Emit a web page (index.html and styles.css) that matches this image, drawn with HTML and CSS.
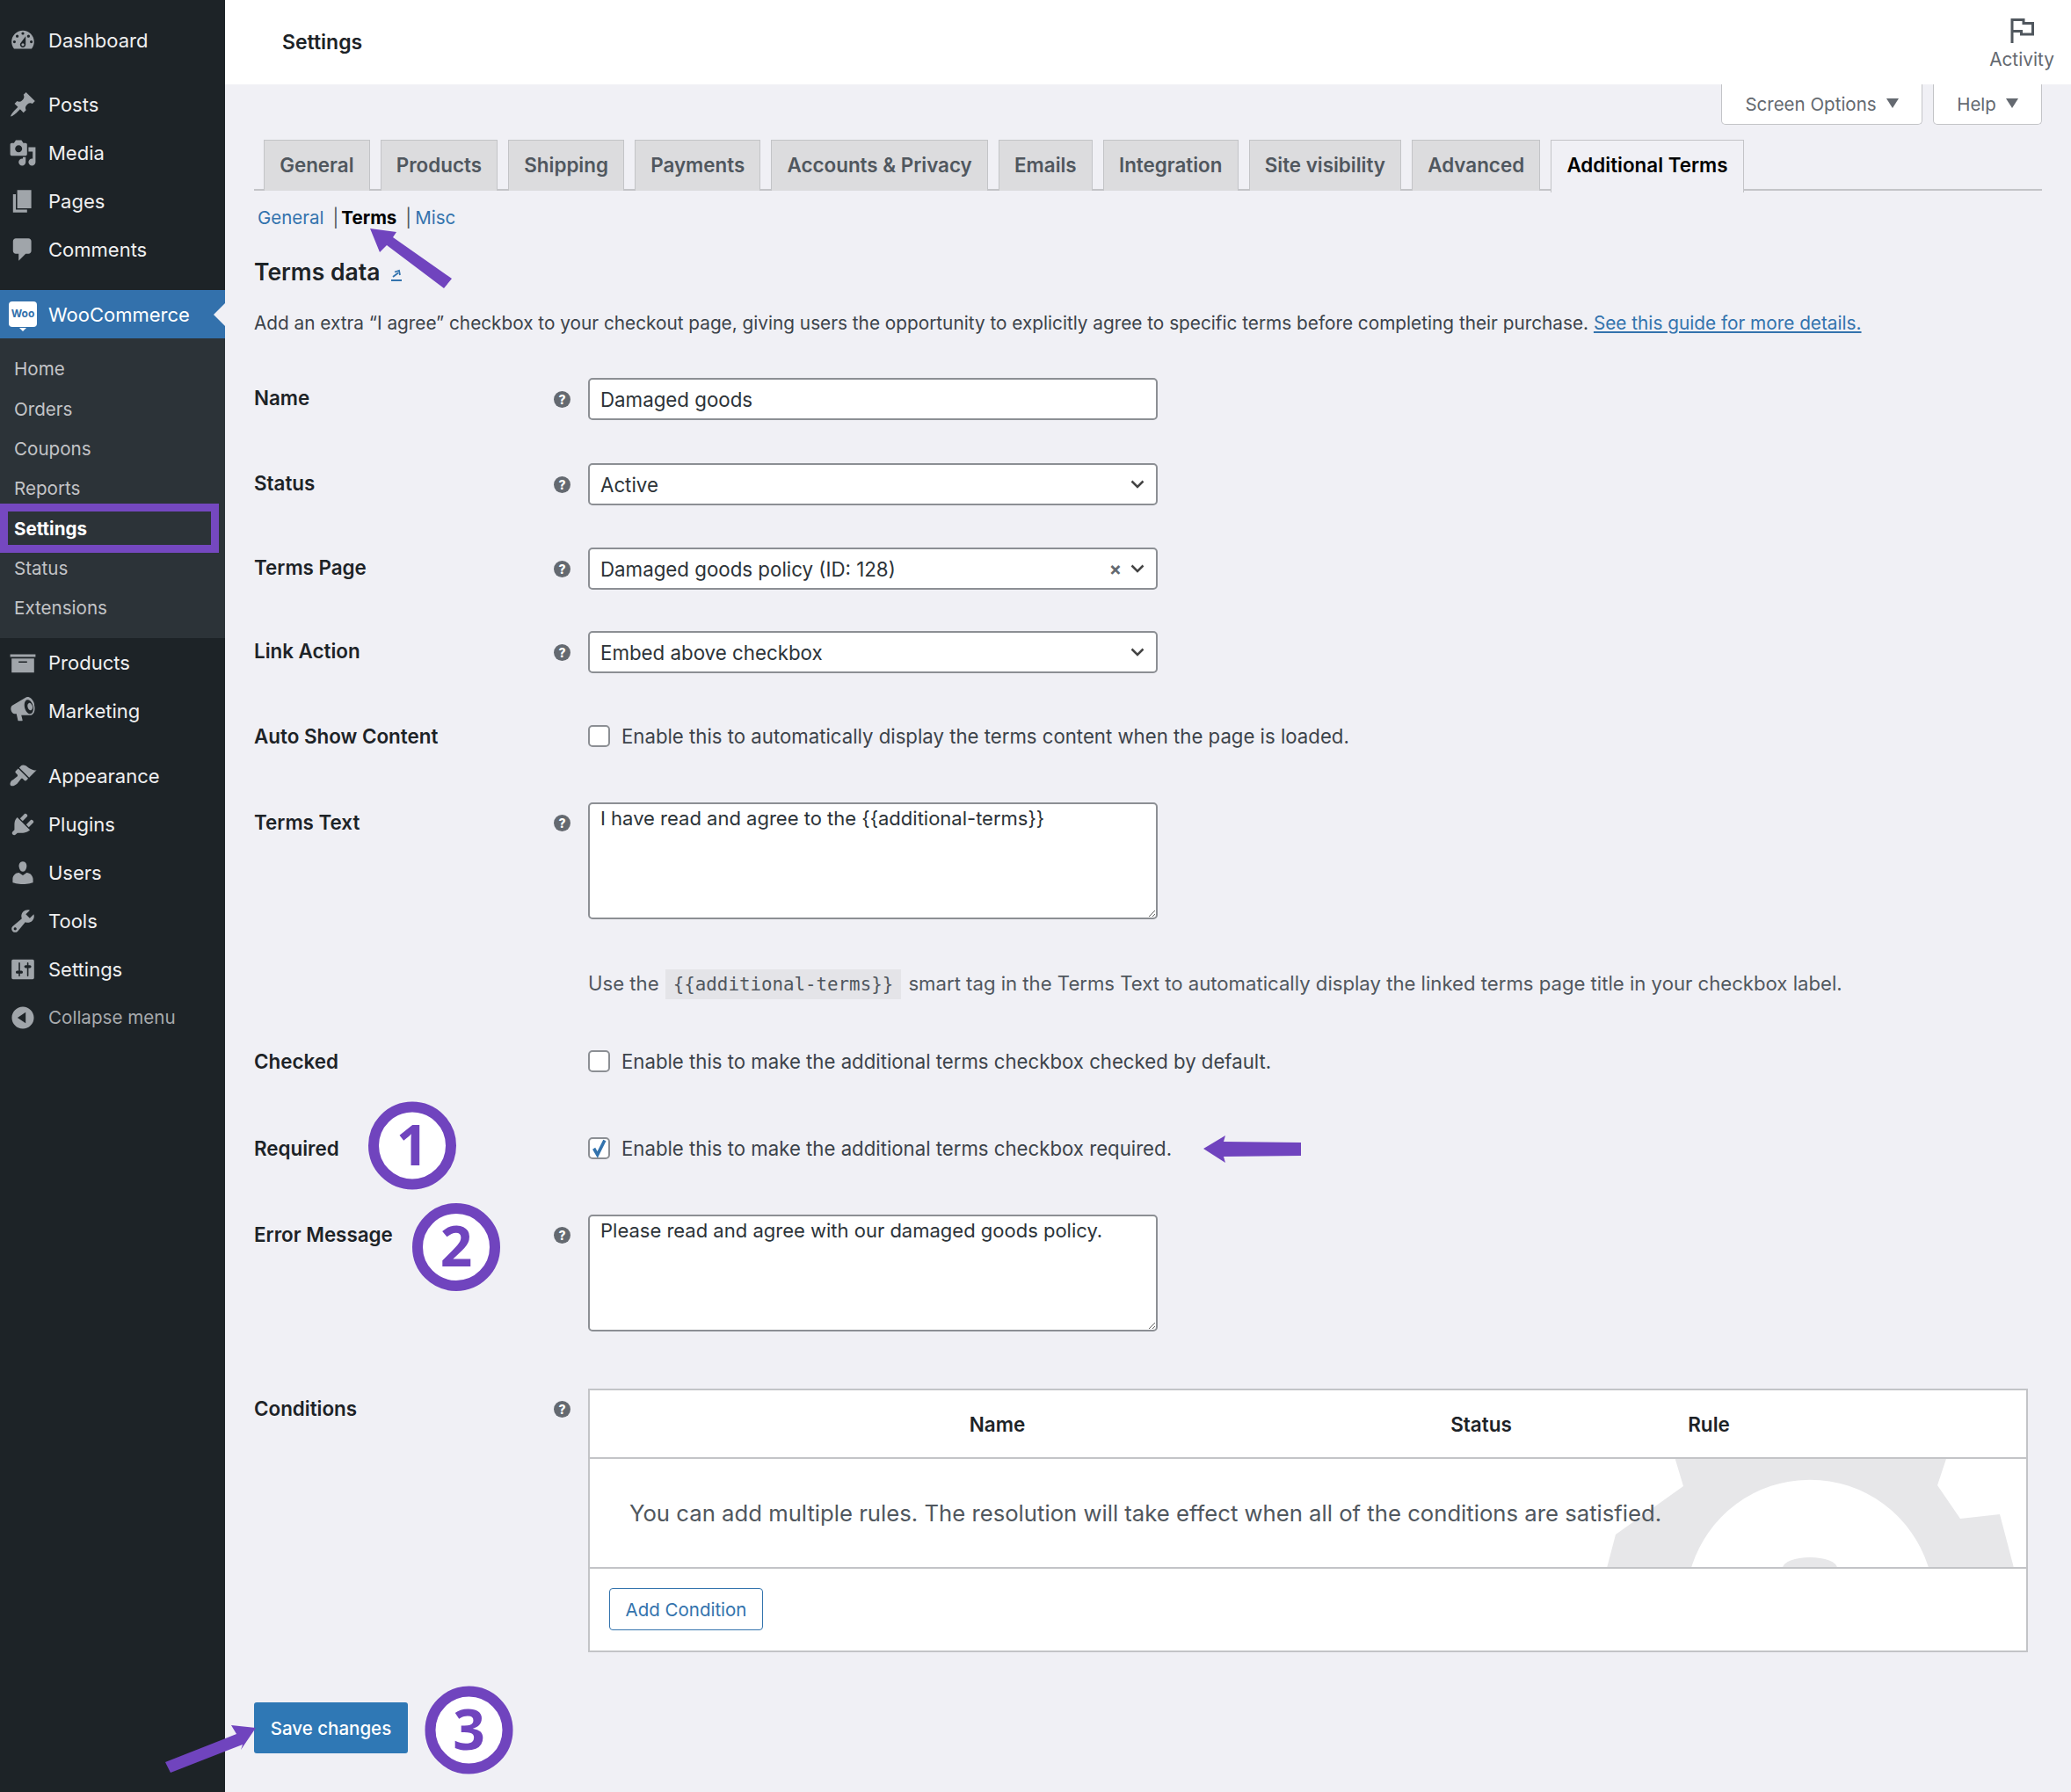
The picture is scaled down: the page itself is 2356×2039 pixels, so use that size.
FILE: index.html
```html
<!DOCTYPE html>
<html lang="en">
<head>
<meta charset="utf-8">
<title>Settings</title>
<link rel="stylesheet" href="styles.css">
</head>
<body>
<div class="page">
<aside class="sidebar">
  <ul class="menu first">
    <li class="item"><svg class="ico" viewBox="0 0 20 20"><path fill-rule="evenodd" d="M3.76 16h12.48c1.1-1.37 1.76-3.11 1.76-5 0-4.42-3.58-8-8-8s-8 3.58-8 8c0 1.89.66 3.63 1.76 5zM10 4c.55 0 1 .45 1 1s-.45 1-1 1-1-.45-1-1 .45-1 1-1zM6 6c.55 0 1 .45 1 1s-.45 1-1 1-1-.45-1-1 .45-1 1-1zm8 0c.55 0 1 .45 1 1s-.45 1-1 1-1-.45-1-1 .45-1 1-1zm-5.37 5.55L12 7v6c0 1.1-.9 2-2 2s-2-.9-2-2c0-.57.24-1.08.63-1.45zM4 10c.55 0 1 .45 1 1s-.45 1-1 1-1-.45-1-1 .45-1 1-1zm12 0c.55 0 1 .45 1 1s-.45 1-1 1-1-.45-1-1 .45-1 1-1zm-5 3c0-.55-.45-1-1-1s-1 .45-1 1 .45 1 1 1 1-.45 1-1z"/></svg>Dashboard</li>
  </ul>
  <ul class="menu">
    <li class="item"><svg class="ico" viewBox="0 0 20 20"><path d="M10.44 3.02l1.82-1.82 6.36 6.35-1.83 1.82c-1.05-.68-2.48-.57-3.41.36l-.75.75c-.92.93-1.04 2.35-.35 3.41l-1.83 1.82-2.41-2.41-2.8 2.79c-.42.42-3.38 2.71-3.8 2.29s1.86-3.39 2.28-3.81l2.79-2.79L4.1 9.36l1.83-1.82c1.05.69 2.48.57 3.4-.36l.75-.75c.93-.92 1.05-2.35.36-3.41z"/></svg>Posts</li>
    <li class="item"><svg class="ico" viewBox="0 0 20 20"><path fill-rule="evenodd" d="M13 11V4c0-.55-.45-1-1-1h-1.67L9 1H5L3.67 3H2c-.55 0-1 .45-1 1v7c0 .55.45 1 1 1h10c.55 0 1-.45 1-1zM7 4.5c1.38 0 2.5 1.12 2.5 2.5S8.38 9.5 7 9.5 4.5 8.38 4.5 7 5.62 4.5 7 4.5zM14 6h5v10.5c0 1.38-1.12 2.5-2.5 2.5S14 17.88 14 16.5s1.12-2.5 2.5-2.5c.17 0 .34.02.5.05V9h-3V6zm-4 8.05V13h2v3.5c0 1.38-1.12 2.5-2.5 2.5S7 17.88 7 16.5 8.12 14 9.5 14c.17 0 .34.02.5.05z"/></svg>Media</li>
    <li class="item"><svg class="ico" viewBox="0 0 20 20"><path d="M6 15V2h10v13H6zm-1 1h8v2H3V5h2v11z"/></svg>Pages</li>
    <li class="item"><svg class="ico" viewBox="0 0 20 20"><path d="M5 2h9c1.1 0 2 .9 2 2v7c0 1.1-.9 2-2 2h-2l-5 5v-5H5c-1.1 0-2-.9-2-2V4c0-1.1.9-2 2-2z"/></svg>Comments</li>
  </ul>
  <ul class="menu">
    <li class="item current"><span class="woo-logo">Woo</span>WooCommerce</li>
    <li>
      <ul class="submenu">
        <li class="subitem">Home</li>
        <li class="subitem">Orders</li>
        <li class="subitem">Coupons</li>
        <li class="subitem">Reports</li>
        <li class="subitem active">Settings</li>
        <li class="subitem">Status</li>
        <li class="subitem">Extensions</li>
      </ul>
    </li>
    <li class="item"><svg class="ico" viewBox="0 0 20 20"><path fill-rule="evenodd" d="M19 4v2H1V4h18zM2 7h16v10H2V7zm11 3V9H7v1h6z"/></svg>Products</li>
    <li class="item"><svg class="ico" viewBox="0 0 20 20"><path fill-rule="evenodd" d="M18.15 5.94c.46 1.62.38 3.22-.02 4.48-.42 1.28-1.26 2.18-2.3 2.48-.16.06-.26.06-.4.06-.06.02-.12.02-.18.02-.06.02-.14.02-.22.02H8.9l.9 3.5c.02.14-.06.26-.14.34-.08.1-.24.16-.34.16H6.95c-.1 0-.26-.06-.34-.16-.08-.08-.16-.2-.14-.34l-1-4.5H4.25l-.02-.02c-.5.06-1.08-.18-1.54-.62s-.88-1.08-1.06-1.88c-.24-.8-.2-1.56-.02-2.2.18-.62.58-1.08 1.06-1.3l.02-.02 9-5.4c.1-.06.18-.1.24-.16.06-.04.14-.08.24-.12.16-.08.28-.12.5-.18 1.04-.3 2.24.1 3.22.98s1.84 2.24 2.26 3.86zm-2.58 5.98h-.02c.4-.1.74-.34 1.04-.7.58-.7.86-1.76.86-3.04 0-.64-.1-1.3-.28-1.98-.34-1.36-1.02-2.5-1.78-3.24s-1.68-1.1-2.46-.88c-.38.1-.72.34-1 .7-.58.7-.84 1.76-.84 3.04 0 .64.08 1.3.26 1.98.34 1.34 1 2.48 1.78 3.22.78.76 1.62 1.1 2.44.9zm-.32-2.46c-.08 0-.16-.04-.24-.06l-.02-.02c-.4-.1-.78-.5-1.08-.96-.1-.18-.2-.38-.28-.6-.08-.2-.14-.42-.2-.64-.16-.64-.14-1.24 0-1.7.02-.06.04-.12.06-.16.2-.54.54-.88.94-1 .46-.12.96.1 1.4.5.42.4.78 1.02.96 1.76.18.72.14 1.4-.06 1.92-.2.5-.54.84-.96.96-.16.04-.34.04-.52 0z"/></svg>Marketing</li>
  </ul>
  <ul class="menu">
    <li class="item"><svg class="ico" viewBox="0 0 20 20"><path d="M14.48 11.06L7.41 3.99l1.5-1.5c.5-.56 2.3-.47 3.51.32 1.21.8 1.43 1.28 2.91 2.1 1.18.64 2.45 1.26 4.45.85zm-.71.71L6.7 4.7 4.93 6.47c-.39.39-.39 1.02 0 1.41l1.06 1.06c.39.39.39 1.03 0 1.42-.6.6-1.43 1.11-2.21 1.69-.35.26-.7.53-1.01.84C1.43 13.23.4 15.75 1.32 16.68s3.45-.1 4.78-1.43c.31-.31.58-.66.85-1.02.57-.78 1.08-1.61 1.69-2.21.39-.39 1.02-.39 1.41 0l1.06 1.06c.39.39 1.02.39 1.41 0z"/></svg>Appearance</li>
    <li class="item"><svg class="ico" viewBox="0 0 20 20"><path d="M13.11 4.36L9.87 7.6 8 5.73l3.24-3.24c.35-.34 1.05-.2 1.56.32.52.51.66 1.21.31 1.55zm-8 1.77l.91-1.12 9.01 9.01-1.19.84c-.71.71-2.63 1.16-3.82 1.16H6.14L4.9 17.26c-.59.59-1.54.59-2.12 0-.59-.58-.59-1.53 0-2.12l1.24-1.24v-3.88c0-1.13.4-3.19 1.09-3.89zm7.26 3.97l3.24-3.24c.34-.35 1.04-.21 1.55.31.52.51.66 1.21.31 1.55l-3.24 3.25z"/></svg>Plugins</li>
    <li class="item"><svg class="ico" viewBox="0 0 20 20"><path d="M10 9.25c-2.27 0-2.73-3.44-2.73-3.44C7 4.02 7.82 2 9.97 2c2.16 0 2.98 2.02 2.71 3.81 0 0-.41 3.44-2.68 3.44zm0 2.57L12.72 10c2.39 0 4.52 2.33 4.52 4.53v2.49s-3.65 1.13-7.24 1.13c-3.65 0-7.24-1.13-7.24-1.13v-2.49c0-2.25 1.94-4.48 4.47-4.48z"/></svg>Users</li>
    <li class="item"><svg class="ico" viewBox="0 0 20 20"><path fill-rule="evenodd" d="M16.68 9.77c-1.34 1.34-3.3 1.67-4.95.99l-5.41 6.52c-.99.99-2.59.99-3.58 0s-.99-2.59 0-3.57l6.52-5.42c-.68-1.65-.35-3.61.99-4.95 1.28-1.28 3.12-1.62 4.72-1.06l-2.89 2.89 2.82 2.82 2.86-2.87c.53 1.58.18 3.39-1.08 4.65zM3.81 16.21c.4.39 1.04.39 1.43 0 .4-.4.4-1.04 0-1.43-.39-.4-1.03-.4-1.43 0-.39.39-.39 1.03 0 1.43z"/></svg>Tools</li>
    <li class="item"><svg class="ico" viewBox="0 0 20 20"><path fill-rule="evenodd" d="M18 16V4c0-.55-.45-1-1-1H3c-.55 0-1 .45-1 1v12c0 .55.45 1 1 1h14c.55 0 1-.45 1-1zM8 11h1c.55 0 1 .45 1 1s-.45 1-1 1H8v1.5c0 .28-.22.5-.5.5s-.5-.22-.5-.5V13H6c-.55 0-1-.45-1-1s.45-1 1-1h1V5.5c0-.28.22-.5.5-.5s.5.22.5.5V11zm5-2h-1c-.55 0-1-.45-1-1s.45-1 1-1h1V5.5c0-.28.22-.5.5-.5s.5.22.5.5V7h1c.55 0 1 .45 1 1s-.45 1-1 1h-1v5.5c0 .28-.22.5-.5.5s-.5-.22-.5-.5V9z"/></svg>Settings</li>
    <li class="item collapse"><svg class="ico" viewBox="0 0 20 20"><path fill-rule="evenodd" d="M10 2.16c4.33 0 7.84 3.51 7.84 7.84s-3.51 7.84-7.84 7.84S2.16 14.33 2.16 10 5.71 2.16 10 2.16zm2 11.72V6.12L6.18 9.97z"/></svg>Collapse menu</li>
  </ul>
</aside>

<main class="main">
  <header class="topbar">
    <h1 class="page-title">Settings</h1>
    <div class="activity">
      <svg class="flag" viewBox="0 0 27 29"><path d="M2 29V2.5H15V6.5H25.5V19H12.5V15.5H2"/></svg>
      <span>Activity</span>
    </div>
  </header>

  <div class="wrap">
    <div class="meta-links">
      <span class="meta-tab screen">Screen Options<i class="caret"></i></span>
      <span class="meta-tab help-tab">Help<i class="caret"></i></span>
    </div>

    <nav class="tabs">
      <a class="tab tab-general">General</a>
      <a class="tab">Products</a>
      <a class="tab">Shipping</a>
      <a class="tab">Payments</a>
      <a class="tab">Accounts &amp; Privacy</a>
      <a class="tab">Emails</a>
      <a class="tab">Integration</a>
      <a class="tab">Site visibility</a>
      <a class="tab">Advanced</a>
      <a class="tab tab-active">Additional Terms</a>
    </nav>

    <div class="subnav">
      <a class="link">General</a><span class="sep sep-a">|</span><strong class="sub-current">Terms</strong><span class="sep sep-b">|</span><a class="link">Misc</a>
    </div>

    <h2 class="section-title">Terms data
      <svg class="ext" viewBox="0 0 14 16"><path d="M1 15H13M3 11L9 6.5M5 5.5L10 4L11 9" /></svg>
    </h2>
    <p class="intro">Add an extra “I agree” checkbox to your checkout page, giving users the opportunity to explicitly agree to specific terms before completing their purchase. <a class="link underline">See this guide for more details.</a></p>

    <section class="form">
      <div class="row r-name">
        <label class="lbl">Name</label><span class="help">?</span>
        <input class="field" type="text" value="Damaged goods">
      </div>
      <div class="row r-status">
        <label class="lbl">Status</label><span class="help">?</span>
        <div class="field faux chev">Active</div>
      </div>
      <div class="row r-page">
        <label class="lbl">Terms Page</label><span class="help">?</span>
        <div class="field faux chev">Damaged goods policy (ID: 128)<span class="clear">×</span></div>
      </div>
      <div class="row r-link">
        <label class="lbl">Link Action</label><span class="help">?</span>
        <div class="field faux chev">Embed above checkbox</div>
      </div>
      <div class="row r-check r-auto">
        <label class="lbl">Auto Show Content</label><span></span>
        <div class="check-line"><input class="cb" type="checkbox"><span>Enable this to automatically display the terms content when the page is loaded.</span></div>
      </div>
      <div class="row r-text r-terms">
        <label class="lbl">Terms Text</label><span class="help">?</span>
        <textarea class="field area">I have read and agree to the {{additional-terms}}</textarea>
      </div>
      <div class="row r-desc">
        <span></span><span></span>
        <p class="desc">Use the <code class="tag">{{additional-terms}}</code> smart tag in the Terms Text to automatically display the linked terms page title in your checkbox label.</p>
      </div>
      <div class="row r-check r-checked">
        <label class="lbl">Checked</label><span></span>
        <div class="check-line"><input class="cb" type="checkbox"><span>Enable this to make the additional terms checkbox checked by default.</span></div>
      </div>
      <div class="row r-check r-required">
        <label class="lbl">Required</label><span></span>
        <div class="check-line"><input class="cb" type="checkbox" checked><span>Enable this to make the additional terms checkbox required.</span></div>
      </div>
      <div class="row r-text r-error">
        <label class="lbl">Error Message</label><span class="help">?</span>
        <textarea class="field area">Please read and agree with our damaged goods policy.</textarea>
      </div>
      <div class="row r-text r-cond">
        <label class="lbl">Conditions</label><span class="help">?</span>
        <div class="cond">
          <div class="cond-head"><span>Name</span><span>Status</span><span>Rule</span></div>
          <div class="cond-body">
            <svg class="gear" viewBox="1667 1659 640 124"><path fill-rule="evenodd" d="M1905 1650H2219L2206 1689L2232 1727L2277 1722L2293 1783H1830L1840 1745L1917 1690ZM2196 1783H1926A141 141 0 0 1 2196 1783ZM2030 1783H2092A31 12 0 0 0 2030 1783Z"/></svg>
            <p>You can add multiple rules. The resolution will take effect when all of the conditions are satisfied.</p>
          </div>
          <div class="cond-foot"><button class="btn-outline">Add Condition</button></div>
        </div>
      </div>
    </section>

    <button class="btn-save">Save changes</button>
  </div>
</main>
</div>

<svg class="annot" viewBox="0 0 2356 2039">
  <polygon points="421,260 451,264 447,270 514,317 505,328 440,279 432,287"/>
  <polygon points="1369,1307 1394,1292 1392,1299 1480,1300 1480,1315 1392,1316 1394,1323"/>
  <polygon points="291,1966 263,1963 269,1973 188,2005 194,2017 276,1985 274,1991"/>
  <g class="badge"><circle cx="469" cy="1303.5" r="44"/><text x="469" y="1326">1</text></g>
  <g class="badge"><circle cx="519" cy="1419" r="44"/><text x="519" y="1441">2</text></g>
  <g class="badge"><circle cx="533.5" cy="1968.5" r="44"/><text x="533.5" y="1991">3</text></g>
</svg>
</body>
</html>
```

FILE: styles.css
```css
*, *::before, *::after { box-sizing: border-box; }
html, body { margin: 0; padding: 0; }
body {
  position: relative;
  width: 2356px;
  height: 2039px;
  overflow: hidden;
  background: #f0f0f5;
  font-family: Inter, "Liberation Sans", sans-serif;
  font-size: 20.5px;
  color: #3c434a;
}
ul { list-style: none; margin: 0; padding: 0; }
p, h1, h2 { margin: 0; }

.page { display: flex; min-height: 2039px; }

/* sidebar */
.sidebar {
  width: 256px;
  flex: none;
  background: #1d2327;
  color: #f0f0f1;
  font-size: 22px;
  padding-top: 18px;
}
.menu { margin-bottom: 19px; }
.first { margin-bottom: 18px; }
.item {
  position: relative;
  display: flex;
  align-items: center;
  height: 55px;
  padding-left: 10px;
  gap: 13px;
}
.ico { width: 32px; height: 32px; flex: none; fill: #a0a5aa; }
.current { background: #3371ac; color: #fff; }
.current::after {
  content: "";
  position: absolute;
  right: 0;
  top: 50%;
  margin-top: -13px;
  border: 13px solid transparent;
  border-left: 0;
  border-right-color: #f0f0f5;
}
.woo-logo {
  position: relative;
  width: 32px;
  height: 29px;
  flex: none;
  border-radius: 4px;
  background: #fff;
  color: #3371ac;
  font-size: 12px;
  font-weight: 700;
  line-height: 27px;
  text-align: center;
}
.woo-logo::after {
  content: "";
  position: absolute;
  left: 12px;
  bottom: -5px;
  border: 4px solid transparent;
  border-top-color: #fff;
  border-bottom: 0;
}
.submenu { background: #2c3338; padding: 12px 0 12px; color: #c3c4c7; font-size: 20.6px; }
.subitem {
  position: relative;
  display: flex;
  align-items: center;
  height: 45.35px;
  padding-left: 16px;
}
.active { color: #fff; font-weight: 700; }
.active::after {
  content: "";
  position: absolute;
  left: 0;
  top: -5px;
  width: 249px;
  height: 56px;
  border: 9px solid #7548c0;
}
.collapse { color: #a7aaad; font-size: 20.6px; }

/* top bar */
.main { flex: 1; min-width: 0; }
.topbar {
  display: flex;
  justify-content: space-between;
  align-items: center;
  height: 96px;
  background: #fff;
  padding: 0 0 0 65px;
}
.page-title { font-size: 23px; font-weight: 600; color: #1d2327; }
.activity {
  display: flex;
  flex-direction: column;
  align-items: center;
  width: 112px;
  padding-top: 3px;
  color: #646970;
  font-size: 20.8px;
}
.flag { width: 27px; height: 29px; margin-bottom: 6px; fill: none; stroke: #50575e; stroke-width: 3; }

/* content */
.wrap { padding: 0 33px; }
.meta-links { display: flex; justify-content: flex-end; gap: 12px; height: 46px; }
.meta-tab {
  display: flex;
  align-items: center;
  justify-content: center;
  height: 46px;
  background: #fff;
  border: 1.5px solid #c3c4c7;
  border-top: 0;
  border-radius: 0 0 5px 5px;
  color: #646970;
  font-size: 20.5px;
}
.screen { width: 229px; }
.help-tab { width: 124px; }
.caret {
  display: inline-block;
  margin-left: 11px;
  margin-top: -3px;
  border: 7px solid transparent;
  border-top: 11px solid #646970;
  border-bottom: 0;
}

.tabs {
  display: flex;
  gap: 12px;
  height: 58px;
  margin-top: 17px;
  padding-left: 11px;
  border-bottom: 2px solid #c3c4c7;
}
.tab {
  display: flex;
  align-items: center;
  height: 58px;
  padding: 0 17.15px 1px;
  background: #dcdcde;
  border: 1.5px solid #c3c4c7;
  border-bottom: 0;
  color: #50575e;
  font-size: 22.4px;
  font-weight: 600;
  line-height: 1;
}
.tab-active { background: #f0f0f5; color: #000; margin-bottom: -2px; height: 60px; padding-bottom: 3px; }

.subnav {
  display: flex;
  align-items: center;
  height: 30px;
  margin-top: 15px;
  padding-left: 4px;
  font-size: 20.5px;
}
.link { color: #3373ad; }
.underline { text-decoration: underline; }
.sep { color: #50575e; }
.sep-a { margin: 0 3px 0 10px; }
.sep-b { margin: 0 4px 0 10px; }
.sub-current { color: #000; font-weight: 700; }

.section-title {
  display: flex;
  align-items: center;
  gap: 12px;
  height: 36px;
  margin-top: 29px;
  font-size: 26.5px;
  font-weight: 600;
  color: #1d2327;
}
.ext { width: 14px; height: 16px; margin-top: 6px; fill: none; stroke: #3373ad; stroke-width: 1.8; }
.intro { margin-top: 26px; line-height: 30px; font-size: 20.77px; color: #3c434a; }

.form { margin-right: 16px; }
.row {
  display: grid;
  grid-template-columns: 340px 40px 1fr;
  align-items: center;
}
.r-name { margin-top: 47px; }
.r-status { margin-top: 49px; }
.r-page { margin-top: 48px; }
.r-link { margin-top: 47px; }
.r-auto { margin-top: 47px; }
.r-terms { margin-top: 52px; }
.r-desc { margin-top: 57px; height: 30px; }
.r-checked { margin-top: 50px; }
.r-required { margin-top: 51px; }
.r-error { margin-top: 52px; }
.r-cond { margin-top: 65px; }
.r-check { height: 48px; }
.r-text { align-items: start; }
.r-text .lbl { margin-top: 9px; }
.r-terms .lbl, .r-error .lbl, .r-cond .lbl { line-height: 27px; }
.r-name .lbl, .r-status .lbl, .r-page .lbl, .r-link .lbl { margin-top: -3px; }

.lbl { font-size: 22.4px; font-weight: 600; color: #1d2327; }
.help {
  display: flex;
  align-items: center;
  justify-content: center;
  width: 19px;
  height: 19px;
  margin-left: 1px;
  border-radius: 50%;
  background: #646970;
  color: #fff;
  font-size: 14px;
  font-weight: 800;
}
.r-text .help { margin-top: 14px; }

.field {
  width: 648px;
  height: 48px;
  padding: 0 12px;
  background: #fff;
  border: 2px solid #8c8f94;
  border-radius: 5px;
  font-family: inherit;
  font-size: 22.3px;
  color: #2c3338;
}
.faux { display: flex; align-items: center; position: relative; }
.chev {
  background-image: url("data:image/svg+xml,%3Csvg xmlns='http://www.w3.org/2000/svg' width='16' height='10'%3E%3Cpath d='M1.5 1.5L8 8l6.5-6.5' fill='none' stroke='%23444' stroke-width='2.5'/%3E%3C/svg%3E");
  background-repeat: no-repeat;
  background-position: right 13px center;
}
.clear { position: absolute; right: 39px; color: #646970; font-size: 21px; font-weight: 700; }
.area {
  display: block;
  height: 133px;
  padding: 1px 12px;
  line-height: 30px;
  margin: 0;
  font-size: 22px;
}
.check-line { display: flex; align-items: center; gap: 13px; font-size: 22.2px; color: #3c434a; }
.cb {
  appearance: none;
  flex: none;
  width: 25px;
  height: 25px;
  margin: 0;
  background: #fff;
  border: 2px solid #8c8f94;
  border-radius: 5px;
}
.cb:checked {
  background-image: url("data:image/svg+xml,%3Csvg xmlns='http://www.w3.org/2000/svg' width='22' height='22'%3E%3Cpath d='M5 11l4 7L17 2' fill='none' stroke='%233373ad' stroke-width='3.5'/%3E%3C/svg%3E");
  background-repeat: no-repeat;
  background-position: center;
}
.desc { font-size: 22.15px; color: #50575e; }
.tag {
  display: inline-block;
  margin: 0 2px 0 1px;
  padding: 2px 9px;
  background: #e4e4e8;
  font-family: "DejaVu Sans Mono", monospace;
  font-size: 20.8px;
  line-height: 30px;
}

.cond {
  display: flex;
  flex-direction: column;
  height: 300px;
  background: #fff;
  border: 2px solid #c3c4c7;
}
.cond-head {
  display: grid;
  grid-template-columns: 927px 174px 344px;
  align-items: center;
  flex: none;
  height: 78px;
  border-bottom: 2px solid #c3c4c7;
  font-size: 22.5px;
  font-weight: 600;
  color: #1d2327;
  text-align: center;
}
.cond-body {
  position: relative;
  display: flex;
  align-items: center;
  flex: none;
  height: 125px;
  overflow: hidden;
  padding-left: 45px;
  border-bottom: 2px solid #c3c4c7;
  font-size: 25.7px;
  color: #50575e;
}
.cond-body p { position: relative; }
.gear { position: absolute; right: 0; top: 0; width: 640px; height: 124px; fill: #e7e7e9; }
.cond-foot { padding: 22px 22px; }
.btn-outline {
  display: block;
  width: 175px;
  height: 48px;
  padding: 0;
  background: #fff;
  border: 1.5px solid #3373ad;
  border-radius: 4px;
  color: #3373ad;
  font-family: inherit;
  font-size: 20.5px;
}
.btn-save {
  display: block;
  width: 175px;
  height: 58px;
  margin-top: 57px;
  padding: 0;
  background: #2f78b5;
  border: 0;
  border-radius: 3px;
  color: #fff;
  font-family: inherit;
  font-size: 20.5px;
  font-weight: 500;
}

/* hand-drawn annotations over the page */
.annot {
  position: absolute;
  left: 0;
  top: 0;
  width: 2356px;
  height: 2039px;
  pointer-events: none;
  fill: #7044be;
}
.badge circle { fill: #fff; stroke: #7044be; stroke-width: 12; }
.badge text {
  fill: #7044be;
  font-family: "Open Sans", sans-serif;
  font-size: 64px;
  font-weight: 700;
  text-anchor: middle;
}
```
